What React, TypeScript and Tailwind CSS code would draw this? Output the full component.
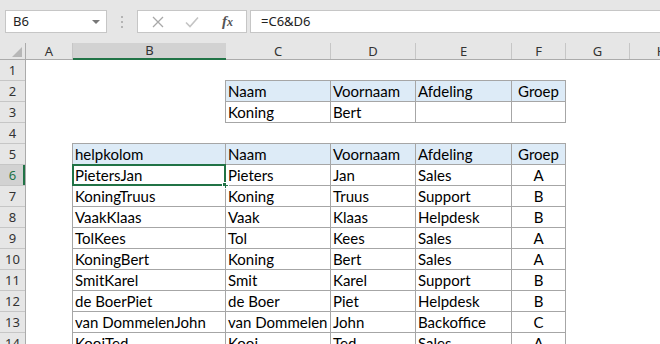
import {ReactNode} from 'react';

const cellFont = {fontFamily: 'Lato, "Liberation Sans", sans-serif'};

const table2 = [
  ['PietersJan', 'Pieters', 'Jan', 'Sales', 'A'],
  ['KoningTruus', 'Koning', 'Truus', 'Support', 'B'],
  ['VaakKlaas', 'Vaak', 'Klaas', 'Helpdesk', 'B'],
  ['TolKees', 'Tol', 'Kees', 'Sales', 'A'],
  ['KoningBert', 'Koning', 'Bert', 'Sales', 'A'],
  ['SmitKarel', 'Smit', 'Karel', 'Support', 'B'],
  ['de BoerPiet', 'de Boer', 'Piet', 'Helpdesk', 'B'],
  ['van DommelenJohn', 'van Dommelen', 'John', 'Backoffice', 'C'],
  ['KooiTed', 'Kooi', 'Ted', 'Sales', 'A'],
];

const Cell = ({
  children,
  head,
  center,
  selected,
}: {
  children?: ReactNode;
  head?: boolean;
  center?: boolean;
  selected?: boolean;
}) => (
  <div
    className={`relative h-[20px] px-[2px] leading-[20px] text-[15px] text-black whitespace-nowrap ${
      head ? 'bg-[#ddebf7]' : 'bg-white'
    } ${center ? 'text-center' : ''}`}>
    {children}
    {selected && (
      <>
        <div className="absolute -inset-px border-2 border-[#217346]" />
        <div className="absolute -right-[4px] -bottom-[4px] w-[7px] h-[7px] bg-[#217346] border border-white" />
      </>
    )}
  </div>
);

const colHeads = [
  {l: 'A', w: 'w-[47px]'},
  {l: 'B', w: 'w-[153px]', sel: true},
  {l: 'C', w: 'w-[105px]'},
  {l: 'D', w: 'w-[85px]'},
  {l: 'E', w: 'w-[96px]'},
  {l: 'F', w: 'w-[54px]'},
  {l: 'G', w: 'w-[64px]'},
  {l: 'H', w: 'w-[64px]'},
];

export default function App() {
  return (
    <div
      className="w-[660px] h-[344px] overflow-hidden bg-white flex flex-col"
      style={{fontFamily: '"Noto Sans", "Open Sans", sans-serif'}}>
      {/* formula bar */}
      <div className="h-[43px] shrink-0 bg-[#e6e6e6] flex items-start pt-[10px]">
        <div className="ml-[5px] w-[102px] h-[23px] bg-white border border-[#c6c6c6] flex items-center pl-[7px] pr-[6px] text-[13px] text-[#222]">
          <span className="flex-1">B6</span>
          <span className="w-0 h-0 border-l-[4px] border-r-[4px] border-t-[4px] border-l-transparent border-r-transparent border-t-[#777]" />
        </div>
        <div className="w-[30px] h-[23px] flex flex-col items-center justify-center gap-[3px]">
          <span className="w-[2px] h-[2px] bg-[#b4b4b4]" />
          <span className="w-[2px] h-[2px] bg-[#b4b4b4]" />
          <span className="w-[2px] h-[2px] bg-[#b4b4b4]" />
        </div>
        <div className="w-[110px] h-[23px] bg-white border border-[#c6c6c6] flex items-center">
          <svg className="ml-[14px]" width="12" height="12" viewBox="0 0 12 12">
            <path d="M1 1L11 11M11 1L1 11" stroke="#a8a8a8" strokeWidth="1.3" />
          </svg>
          <svg className="ml-[21px]" width="14" height="12" viewBox="0 0 14 12">
            <path d="M1 6.5L5 10.5L13 1.5" stroke="#c4c4c4" strokeWidth="1.6" fill="none" />
          </svg>
          <span
            className="ml-[23px] text-[15px] italic font-bold text-[#555] leading-none"
            style={{fontFamily: '"Liberation Serif", serif'}}>
            f<span className="text-[12px]">x</span>
          </span>
        </div>
        <div className="ml-[3px] flex-1 h-[23px] bg-white border border-[#c6c6c6] border-r-0 flex items-center pl-[10px] text-[13px] text-[#222]">
          =C6&amp;D6
        </div>
      </div>

      {/* column headers */}
      <div className="h-[17px] shrink-0 flex bg-[#e6e6e6] border-b border-[#ababab] text-[13px] text-[#333]">
        <div className="w-[26px] shrink-0 border-r border-[#ababab] relative">
          <svg className="absolute right-[3px] bottom-[2px]" width="10" height="10" viewBox="0 0 10 10">
            <path d="M10 0V10H0Z" fill="#b7b7b7" />
          </svg>
        </div>
        {colHeads.map(c => (
          <div
            key={c.l}
            className={`${c.w} shrink-0 flex items-center justify-center leading-none ${
              c.sel
                ? 'bg-[#d2d2d2] border-b-2 border-[#217346] -mb-px'
                : 'border-r border-[#c6c6c6]'
            }`}>
            {c.l}
          </div>
        ))}
      </div>

      {/* sheet */}
      <div className="flex flex-1">
        <div className="w-[26px] shrink-0 flex flex-col bg-[#e6e6e6] border-r border-[#ababab] text-[13px] text-[#333]">
          {Array.from({length: 14}, (_, i) => i + 1).map(n => (
            <div
              key={n}
              className={`h-[21px] shrink-0 border-b flex items-center justify-center leading-none ${
                n === 6
                  ? 'bg-[#d2d2d2] border-[#c6c6c6] text-[#217346] shadow-[inset_-2px_0_0_#217346]'
                  : 'border-[#c6c6c6]'
              }`}>
              {n}
            </div>
          ))}
        </div>

        <div className="flex-1 flex flex-col" style={cellFont}>
          <div className="h-[20px] shrink-0" />
          <div className="ml-[199px] w-fit grid grid-cols-[104px_84px_95px_53px] gap-px p-px bg-[#a6a6a6]">
            <Cell head>Naam</Cell>
            <Cell head>Voornaam</Cell>
            <Cell head>Afdeling</Cell>
            <Cell head center>Groep</Cell>
            <Cell>Koning</Cell>
            <Cell>Bert</Cell>
            <Cell />
            <Cell />
          </div>
          <div className="h-[20px] shrink-0" />
          <div className="ml-[46px] w-fit grid grid-cols-[152px_104px_84px_95px_53px] gap-px p-px bg-[#a6a6a6]">
            <Cell head>helpkolom</Cell>
            <Cell head>Naam</Cell>
            <Cell head>Voornaam</Cell>
            <Cell head>Afdeling</Cell>
            <Cell head center>Groep</Cell>
            {table2.map((r, i) =>
              r.map((v, j) => (
                <Cell key={`${i}-${j}`} center={j === 4} selected={i === 0 && j === 0}>
                  {v}
                </Cell>
              )),
            )}
          </div>
        </div>
      </div>
    </div>
  );
}
